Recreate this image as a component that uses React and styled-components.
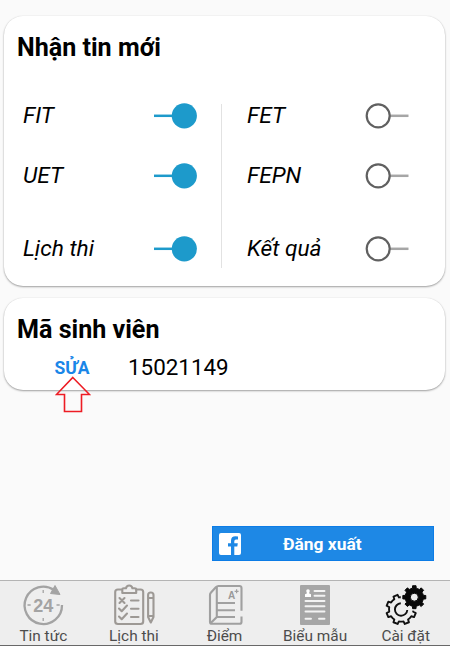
import React from "react";
import styled, { createGlobalStyle } from "styled-components";

const GlobalStyle = createGlobalStyle`
  *, *::before, *::after { box-sizing: border-box; }
  body { margin: 0; background: #fafafa; font-family: Roboto, sans-serif; color: #000; }
`;

const Screen = styled.div`
  width: 450px;
  height: 646px;
  overflow: hidden;
  display: flex;
  flex-direction: column;
  background: #fafafa;
`;

const Content = styled.main`
  flex: 1;
  display: flex;
  flex-direction: column;
  gap: 12px;
  padding: 16px 5px 0 4px;
`;

const Card = styled.section`
  height: ${(p) => p.$height}px;
  border-radius: 19px;
  background: #fff;
  box-shadow: 0 1px 2px rgba(0, 0, 0, 0.36), 0 0 1px rgba(0, 0, 0, 0.12);
  padding: 17px 36px 0 13px;
`;

const Title = styled.h2`
  margin: 0;
  font-size: 25.1px;
  line-height: 30px;
  font-weight: 700;
  white-space: nowrap;
`;

const Columns = styled.div`
  display: grid;
  grid-template-columns: 205px 187px;
  margin-top: 41px;
  height: 164px;
`;

const Column = styled.div`
  display: grid;
  grid-template-rows: 60px 60px 44px;
  padding-left: ${(p) => p.$inset}px;
  padding-right: ${(p) => p.$end}px;
  border-right: ${(p) => (p.$divided ? "1px solid #e2e2e2" : "none")};
`;

const Setting = styled.label`
  display: flex;
  justify-content: space-between;
  align-items: flex-start;
  padding-top: ${(p) => p.$offset || 0}px;
  font-size: 22.7px;
  line-height: 24px;
  font-style: italic;
  white-space: nowrap;
`;

const SwitchGraphic = styled.svg`
  display: block;
  flex: none;
  overflow: visible;
`;

const Switch = ({ on }) => (
  <SwitchGraphic width="43" height="25" viewBox="0 0 43 25" role="switch" aria-checked={on}>
    {on ? (
      <>
        <path d="M0 11.800H20" stroke="#1d9acb" strokeWidth="2.500" />
        <circle cx="30.300" cy="11.800" r="12.600" fill="#1d9acb" />
      </>
    ) : (
      <>
        <path d="M24 11.800H42.500" stroke="#a6a6a6" strokeWidth="2.500" />
        <circle cx="12.200" cy="11.800" r="11.500" fill="#fff" stroke="#606060" strokeWidth="2.200" />
      </>
    )}
  </SwitchGraphic>
);

const StudentRow = styled.div`
  position: relative;
  display: flex;
  align-items: center;
  gap: 37px;
  height: 28px;
  margin-top: 8px;
  padding-left: 37px;
`;

const EditButton = styled.button`
  border: 0;
  padding: 2px 0 0;
  width: 36px;
  background: none;
  color: #1a86e8;
  font: 700 17.5px/28px Roboto, sans-serif;
  white-space: nowrap;
`;

const StudentId = styled.span`
  padding-left: 1px;
  font-size: 22.4px;
  line-height: 28px;
`;

const Pointer = styled.svg`
  position: absolute;
  left: 38px;
  top: 23px;
`;

const LogoutButton = styled.button`
  align-self: flex-end;
  display: flex;
  align-items: center;
  width: 222px;
  height: 35px;
  margin: auto 11px 19px 0;
  padding: 1px 0 0 6px;
  border: 1px solid #0c7ce6;
  background: #1e88e5;
  color: #fff;
  font: 700 17.4px/32px Roboto, sans-serif;
`;

const LogoutText = styled.span`
  margin-left: 42px;
`;

const TabBar = styled.nav`
  height: 66px;
  flex: none;
  display: grid;
  grid-template-columns: repeat(5, 90.6px);
  justify-content: center;
  background: #eee;
  border-top: 1px solid #b4b4b4;
  border-bottom: 1px solid #686868;
`;

const Tab = styled.a`
  display: flex;
  flex-direction: column;
  align-items: center;
  padding-top: 3px;
  padding-right: 1px;
  color: #4c4c4c;
  font-size: 15.4px;
  line-height: 18px;
  white-space: nowrap;

  svg { display: block; margin-bottom: 1px; flex: none; overflow: visible; }
`;

function gearPath(cx, cy, outer, inner, teeth, phase = 0) {
  const step = (Math.PI * 2) / teeth;
  const at = (r, a) =>
    `${(cx + r * Math.cos(a)).toFixed(2)} ${(cy + r * Math.sin(a)).toFixed(2)}`;
  let d = "";
  for (let i = 0; i < teeth; i++) {
    const a = phase + i * step;
    d += `${i ? "L" : "M"}${at(inner, a - step * 0.26)}L${at(outer, a - step * 0.19)}`;
    d += `L${at(outer, a + step * 0.19)}L${at(inner, a + step * 0.26)}`;
    d += `A${inner} ${inner} 0 0 1 ${at(inner, a + step * 0.74)}`;
  }
  return d + "Z";
}

const NewsIcon = () => (
  <svg width="42" height="42" viewBox="0 0 42 42" fill="none" stroke="#a3a3a3">
    <path d="M32 6A18.700 18.700 0 1 0 40 21" strokeWidth="2.300" />
    <path d="M33 1.500L38 10.500L28.500 9.500Z" fill="#a3a3a3" strokeWidth="1" />
    <path d="M21.200 6v3M21.200 34v3M5.500 21h3.200M34.500 21h3.200" strokeWidth="1.300" />
    <text x="21.300" y="27.600" textAnchor="middle" fill="#a3a3a3" stroke="none" fontFamily="Liberation Sans, sans-serif" fontWeight="700" fontSize="18">24</text>
  </svg>
);

const ScheduleIcon = () => (
  <svg width="42" height="42" viewBox="0 0 42 42" fill="none" stroke="#9d9995" strokeWidth="2.100" strokeLinecap="round" strokeLinejoin="round">
    <path d="M9 5.500H5Q2.200 5.500 2.200 8V37.500Q2.200 40 5 40H27.500Q30.200 40 30.200 37.500V8Q30.200 5.500 27.500 5.500H23.500" />
    <path d="M9.300 9V5.500Q9.300 4.200 10.800 4.200H13Q13.500 1.500 16.200 1.500T19.400 4.200H21.600Q23.200 4.200 23.200 5.500V9Z" />
    <path d="M6.500 14l5 5M11.500 14l-5 5M18 16.500H25.500M18 24.800H25.500M18 33H25.500" />
    <path d="M6 24.500l2.700 2.700L14 21.500M6 32.500l2.700 2.700L14 29.500" />
    <path d="M35.100 11Q35.100 8.500 37.800 8.500T40.500 11V33L37.800 38.500L35.100 33ZM35.100 14H40.500M35.100 32H40.500" />
  </svg>
);

const GradeIcon = () => (
  <svg width="42" height="42" viewBox="0 0 42 42" fill="none" stroke="#a0a0a0" strokeWidth="2.100">
    <path d="M37.500 26.800V4Q37.500 2 35.500 2H14.500Q13 2 11.800 3.200L6.800 8.700Q6 9.500 6 11V38Q6 39.800 8 39.800H35.500Q37.500 39.800 37.500 38V32.500" />
    <path d="M6.500 39.200L12.800 33V3M12.800 19H31M12.800 26.300H31M12.800 33H31" />
    <text x="24" y="15" fill="#999" stroke="none" fontFamily="Liberation Sans, sans-serif" fontWeight="700" fontSize="10">A</text>
    <path d="M32.600 5.300v4M30.600 7.300h4" strokeWidth="1.200" />
  </svg>
);

const FormIcon = () => (
  <svg width="42" height="42" viewBox="0 0 42 42">
    <rect x="6" y="1" width="30" height="40" rx="1" fill="#a6a6a6" />
    <circle cx="14" cy="7" r="1.800" fill="#fff" />
    <path d="M12.800 8h2.400v1.500l1.800.8V13h-6v-2.700l1.800-.8Z" fill="#fff" />
    <path d="M20.500 7H30.500M20.500 11.700H30.500M11.500 17H30.500M11.500 22.200H30.500M11.500 27.500H30.500M11.500 34.800H17M25 34.800H30.500" stroke="#f3f3f3" strokeWidth="1.900" strokeLinecap="round" />
  </svg>
);

const SettingsIcon = () => (
  <svg width="42" height="42" viewBox="0 0 42 42">
    <defs>
      <mask id="gearGap">
        <rect width="42" height="42" fill="#fff" />
        <circle cx="29.300" cy="13.200" r="13.500" fill="#000" />
      </mask>
    </defs>
    <path d={gearPath(16.2, 25.4, 15, 12.2, 8, Math.PI / 8)} fill="none" stroke="#111" strokeWidth="1.900" strokeLinejoin="round" mask="url(#gearGap)" />
    <path d="M15.800 19.300A6.200 6.200 0 1 0 22.300 26" fill="none" stroke="#111" strokeWidth="1.900" />
    <path d={`${gearPath(29.3, 13.2, 11.6, 9.2, 8)}M33.300 13.200A4 4 0 1 0 25.300 13.200A4 4 0 1 0 33.300 13.200Z`} fill="#080808" stroke="#080808" strokeWidth="1" strokeLinejoin="round" fillRule="evenodd" />
  </svg>
);

const FacebookIcon = () => (
  <svg width="22" height="22" viewBox="0 0 22 22">
    <path fillRule="evenodd" fill="#fff" d="M2 0H20Q22 0 22 2V20Q22 22 20 22H15.300V13.600H18.300L18.800 10.200H15.300V8.200Q15.300 6.600 17 6.600H19V3.500Q17.700 3.300 16.500 3.300Q12 3.300 12 7.700V10.200H9V13.600H12V22H2Q0 22 0 20V2Q0 0 2 0Z" />
  </svg>
);

const subscriptions = [
  [
    { label: "FIT", on: true },
    { label: "UET", on: true },
    { label: "Lịch thi", on: true, offset: 13 },
  ],
  [
    { label: "FET", on: false },
    { label: "FEPN", on: false },
    { label: "Kết quả", on: false, offset: 13 },
  ],
];

const tabs = [
  { label: "Tin tức", Icon: NewsIcon },
  { label: "Lịch thi", Icon: ScheduleIcon },
  { label: "Điểm", Icon: GradeIcon },
  { label: "Biểu mẫu", Icon: FormIcon },
  { label: "Cài đặt", Icon: SettingsIcon },
];

export default function App() {
  return (
    <Screen>
      <GlobalStyle />
      <Content>
        <Card $height={270}>
          <Title>Nhận tin mới</Title>
          <Columns>
            {subscriptions.map((items, i) => (
              <Column key={i} $divided={i === 0} $inset={i === 0 ? 6 : 25} $end={i === 0 ? 24 : 0}>
                {items.map((item) => (
                  <Setting key={item.label} $offset={item.offset}>
                    {item.label}
                    <Switch on={item.on} />
                  </Setting>
                ))}
              </Column>
            ))}
          </Columns>
        </Card>
        <Card $height={92}>
          <Title>Mã sinh viên</Title>
          <StudentRow>
            <EditButton>SỬA</EditButton>
            <StudentId>15021149</StudentId>
            <Pointer width="36" height="38" viewBox="0 0 36 38">
              <path d="M17.800 1.500L34.500 18.500H26.500V35.500H9.500V18.500H1.500Z" fill="none" stroke="#ed1c24" strokeWidth="1.600" />
            </Pointer>
          </StudentRow>
        </Card>
        <LogoutButton>
          <FacebookIcon />
          <LogoutText>Đăng xuất</LogoutText>
        </LogoutButton>
      </Content>
      <TabBar>
        {tabs.map(({ label, Icon }) => (
          <Tab key={label}>
            <Icon />
            {label}
          </Tab>
        ))}
      </TabBar>
    </Screen>
  );
}
